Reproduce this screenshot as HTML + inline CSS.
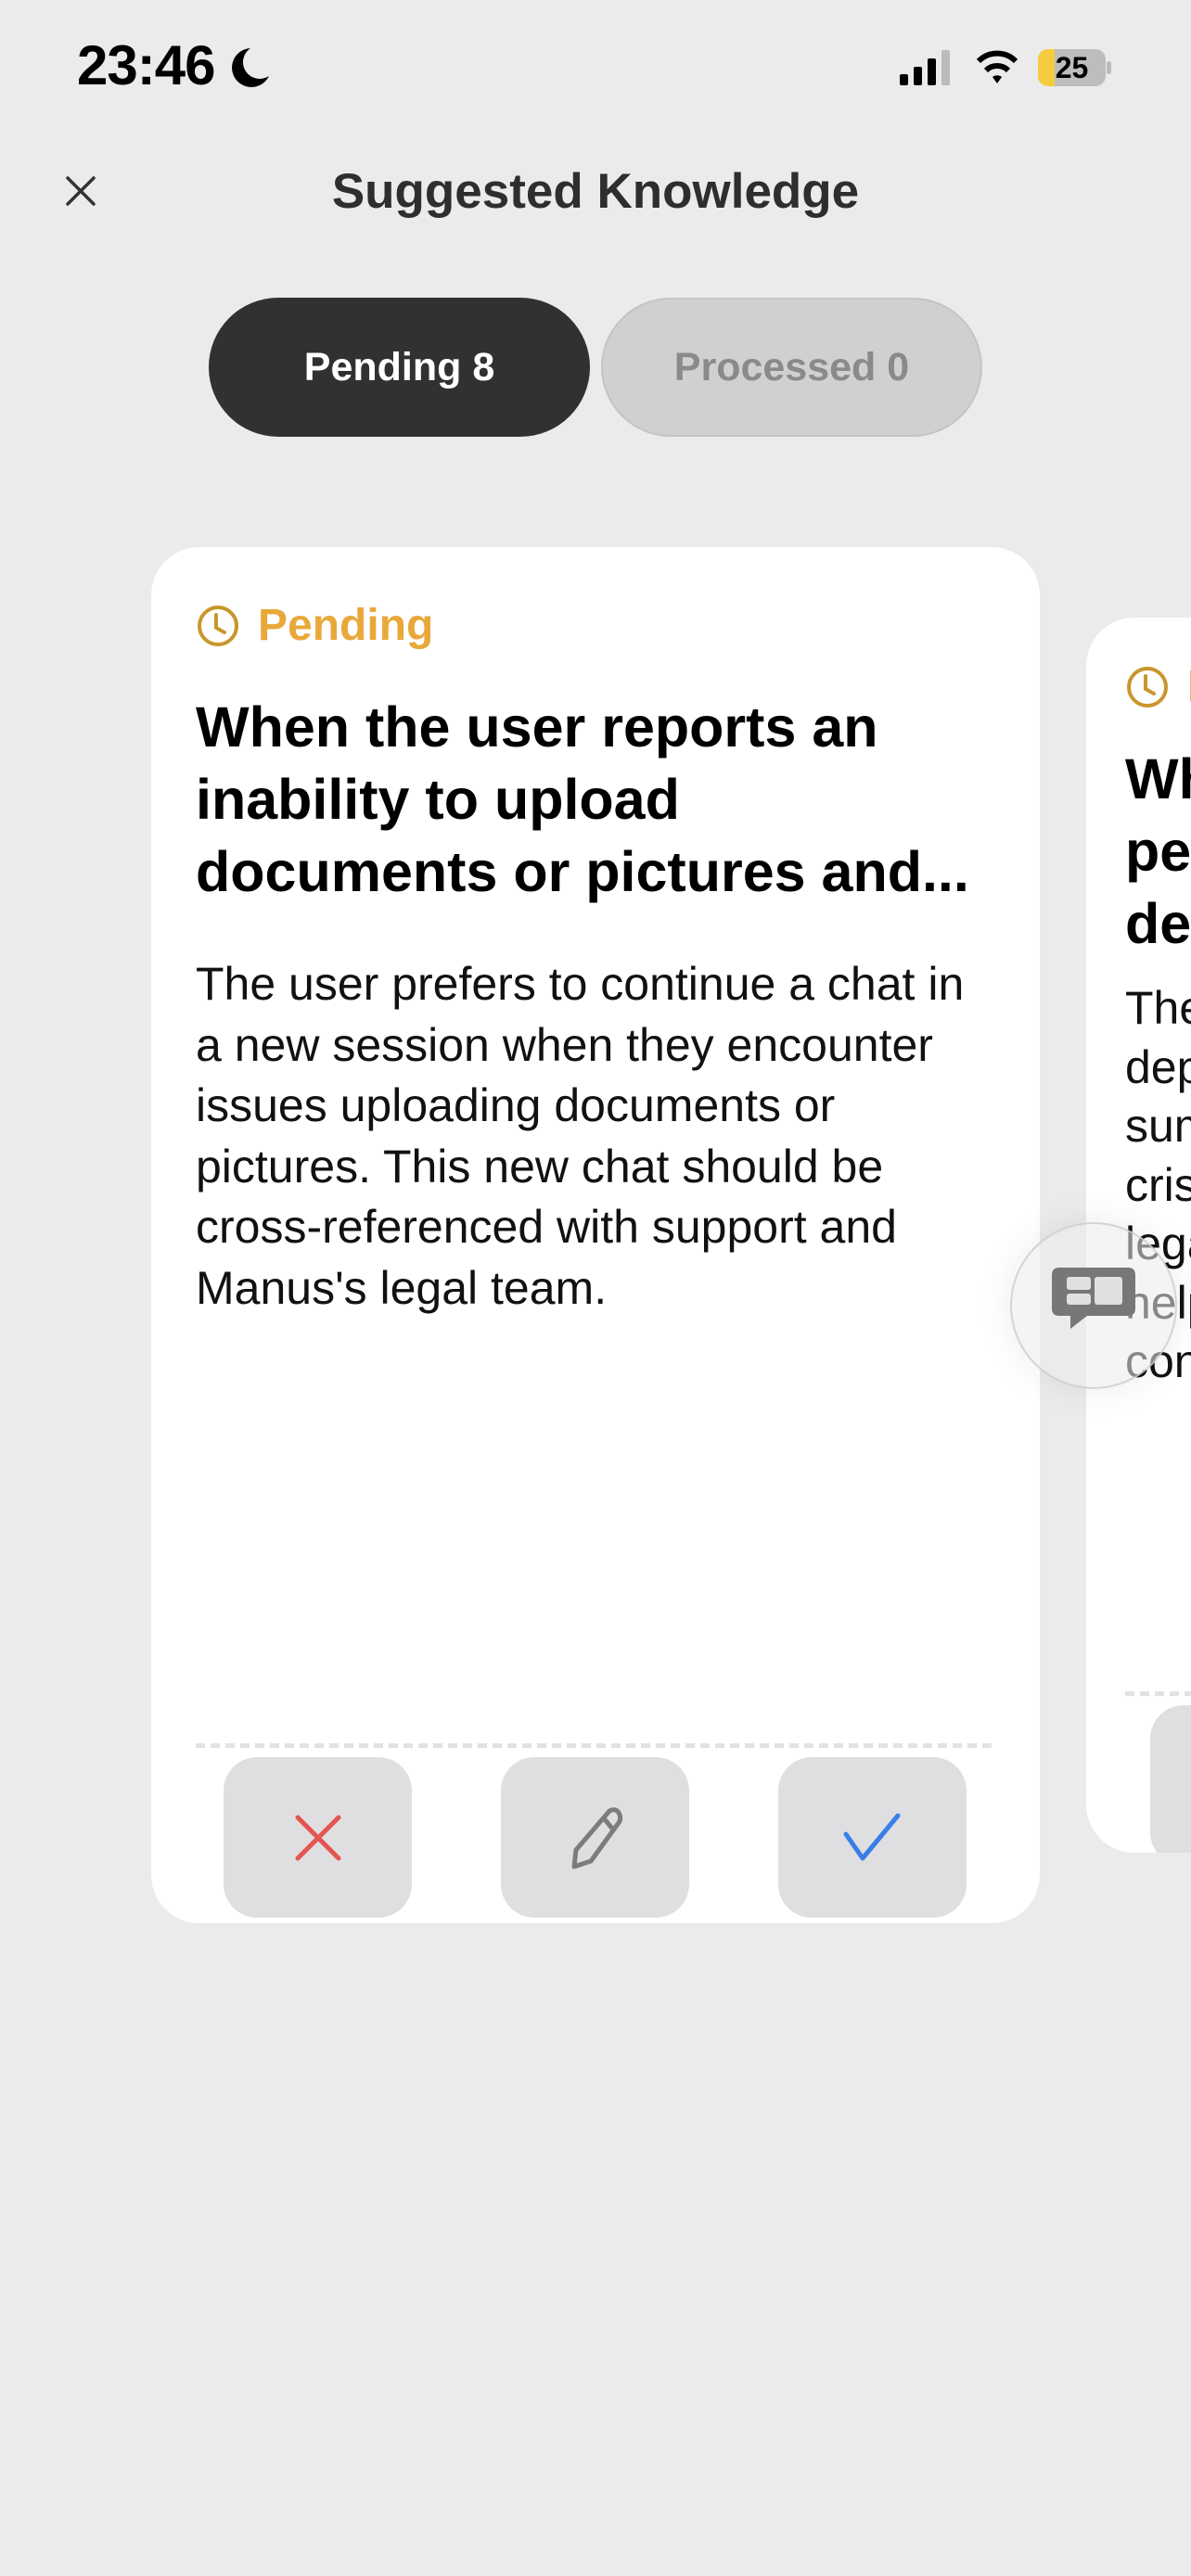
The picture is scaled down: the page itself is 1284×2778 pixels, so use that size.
<!DOCTYPE html>
<html><head><meta charset="utf-8"><style>
*{margin:0;padding:0;box-sizing:border-box}
html,body{width:1284px;height:2778px;overflow:hidden;background:#ebebeb;font-family:"Liberation Sans",sans-serif}
#wrap{position:relative;width:1284px;height:2778px;overflow:hidden}
.abs{position:absolute}
.time{left:83px;top:36px;font-size:60px;font-weight:bold;color:#000;letter-spacing:-1px}
.title{left:0;width:1284px;text-align:center;top:176px;font-size:53px;font-weight:bold;color:#2e2e2e}
.pill{top:321px;height:150px;width:411px;border-radius:75px;text-align:center;line-height:150px;font-size:43px;font-weight:bold}
.card{background:#fff;border-radius:52px;overflow:hidden}
.plab{font-size:48px;font-weight:bold;color:#e9a83a}
.ctitle{font-size:61px;font-weight:bold;color:#000;line-height:78px;white-space:nowrap}
.cbody{font-size:50px;color:#111;line-height:65.5px;white-space:nowrap}
.dash{height:5px;background:repeating-linear-gradient(90deg,#e2e2e4 0 10px,transparent 10px 16px)}
.btn{background:#dfdfe1;border-radius:36px;width:203px;height:173px;display:flex;align-items:center;justify-content:center}
</style></head><body><div id="wrap">
<div class="abs time">23:46</div>
<svg class="abs" style="left:248px;top:50px" width="44" height="46" viewBox="0 0 44 46"><path d="M22 2 A21 21 0 1 0 42 32 A18 18 0 0 1 22 2Z" fill="#000"/></svg>
<svg class="abs" style="left:970px;top:54px" width="62" height="38"><rect x="0" y="26" width="9" height="12" rx="2" fill="#000"/><rect x="15" y="18" width="9" height="20" rx="2" fill="#000"/><rect x="30" y="9" width="9" height="29" rx="2" fill="#000"/><rect x="45" y="0" width="9" height="38" rx="2" fill="#bbb"/></svg>
<svg class="abs" style="left:1050px;top:52px" width="50" height="40" viewBox="0 0 50 40"><path d="M25 38 L30 31 A8 8 0 0 0 20 31Z" fill="#000"/><path d="M13 24 A17 17 0 0 1 37 24" stroke="#000" stroke-width="6" fill="none"/><path d="M5 14 A28 28 0 0 1 45 14" stroke="#000" stroke-width="6" fill="none"/></svg>
<div class="abs" style="left:1119px;top:53px;width:73px;height:40px;border-radius:11px;background:#bdbdbd;overflow:hidden"><div style="width:18px;height:40px;background:#f5cc3f"></div></div>
<div class="abs" style="left:1193px;top:66px;width:5px;height:14px;border-radius:3px;background:#bbb"></div>
<div class="abs" style="left:1119px;top:53px;width:73px;height:40px;text-align:center;line-height:40px;font-size:32px;font-weight:bold;color:#000">25</div>
<svg class="abs" style="left:70px;top:189px" width="34" height="34"><path d="M3 3 L31 31 M31 3 L3 31" stroke="#333" stroke-width="3.5" stroke-linecap="round"/></svg>
<div class="abs title">Suggested Knowledge</div>
<div class="abs pill" style="left:225px;background:#313133;color:#fff">Pending 8</div>
<div class="abs pill" style="left:648px;background:#d0d0d2;color:#8a8a8a;border:2px solid #c4c4c6;line-height:146px">Processed 0</div>

<div class="abs card" style="left:163px;top:590px;width:958px;height:1484px">
  <svg class="abs" style="left:49px;top:62px" width="46" height="46" viewBox="0 0 46 46"><circle cx="23" cy="23" r="20" fill="none" stroke="#c9962e" stroke-width="4"/><path d="M21 11 V25 L30 30" fill="none" stroke="#c9962e" stroke-width="4" stroke-linecap="round"/></svg>
  <div class="abs plab" style="left:115px;top:57px">Pending</div>
  <div class="abs ctitle" style="left:48px;top:155px">When the user reports an<br>inability to upload<br>documents or pictures and...</div>
  <div class="abs cbody" style="left:48px;top:439px">The user prefers to continue a chat in<br>a new session when they encounter<br>issues uploading documents or<br>pictures. This new chat should be<br>cross-referenced with support and<br>Manus's legal team.</div>
  <div class="abs dash" style="left:48px;top:1290px;width:862px"></div>
  <div class="abs btn" style="left:78px;top:1305px"><svg width="60" height="60"><path d="M8 8 L52 52 M52 8 L8 52" stroke="#e45552" stroke-width="5" stroke-linecap="round"/></svg></div>
  <div class="abs btn" style="left:377px;top:1305px"><svg width="70" height="70" viewBox="0 0 70 70"><path d="M50 6 Q58 2 61 10 Q63 16 59 20 L30 60 L12 66 L14 48 Z M44 14 L54 26" fill="none" stroke="#7c7c7c" stroke-width="5" stroke-linejoin="round"/></svg></div>
  <div class="abs btn" style="left:676px;top:1305px"><svg width="70" height="60"><path d="M6 26 L24 52 L62 6" fill="none" stroke="#3a7ee6" stroke-width="5" stroke-linecap="round" stroke-linejoin="round"/></svg></div>
</div>

<div class="abs card" style="left:1171px;top:666px;width:958px;height:1332px">
  <svg class="abs" style="left:43px;top:52px" width="46" height="46" viewBox="0 0 46 46"><circle cx="23" cy="23" r="20" fill="none" stroke="#c9962e" stroke-width="4"/><path d="M21 11 V25 L30 30" fill="none" stroke="#c9962e" stroke-width="4" stroke-linecap="round"/></svg>
  <div class="abs plab" style="left:109px;top:47px">Pending</div>
  <div class="abs ctitle" style="left:42px;top:135px">When the user requests<br>personal data about<br>deposits and...</div>
  <div class="abs cbody" style="left:42px;top:390px;line-height:63.5px">The user wants<br>deposit details<br>summarized for the<br>crisis response and<br>legal review to<br>help with the<br>conversation.</div>
  <div class="abs dash" style="left:42px;top:1158px;width:862px"></div>
  <div class="abs btn" style="left:69px;top:1173px"></div>
</div>

<div class="abs" style="left:1089px;top:1318px;width:180px;height:180px;border-radius:50%;background:rgba(235,235,235,0.55);border:2px solid rgba(200,200,200,0.7);box-shadow:0 0 40px rgba(0,0,0,0.08)"></div>
<svg class="abs" style="left:1132px;top:1365px" width="94" height="90" viewBox="0 0 94 90"><path d="M10 2 H84 Q92 2 92 10 V46 Q92 54 84 54 H40 L22 68 V54 H10 Q2 54 2 46 V10 Q2 2 10 2Z" fill="#777"/><rect x="18" y="12" width="26" height="14" rx="3" fill="#e0e0e0"/><rect x="48" y="12" width="30" height="30" rx="3" fill="#e0e0e0"/><rect x="18" y="30" width="26" height="12" rx="3" fill="#e0e0e0"/></svg>
</div></body></html>
